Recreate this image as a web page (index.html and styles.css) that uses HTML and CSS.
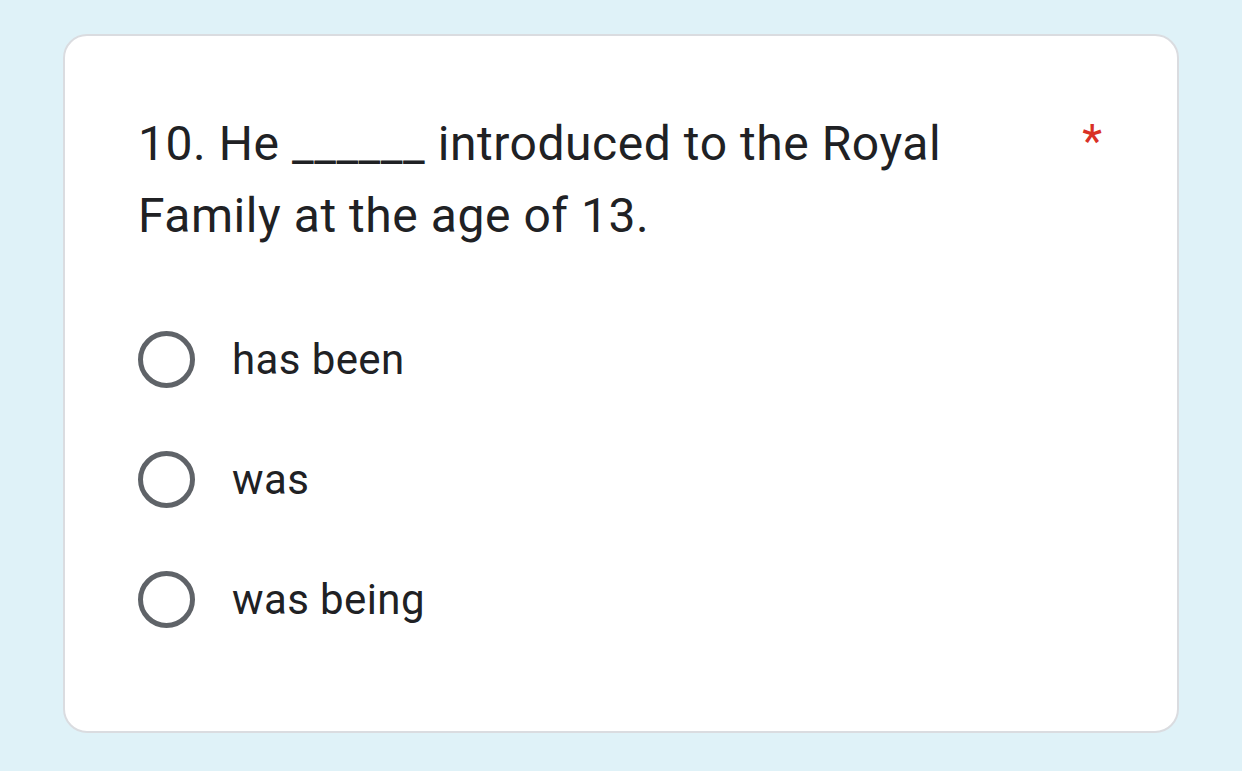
FILE: index.html
```html
<!DOCTYPE html>
<html lang="en">
<head>
    <meta charset="UTF-8">
    <meta name="viewport" content="width=device-width, initial-scale=1.0">
    <title>Question 10</title>
    <link rel="stylesheet" href="styles.css">
</head>
<body>

<div class="card">
    <div class="question-head">
        <div class="question-title">10. He ______ introduced to the Royal Family at the age of 13.</div>
        <span class="required">*</span>
    </div>

    <div class="options">
        <label class="option">
            <span class="radio"></span>
            <span class="option-text">has been</span>
        </label>
        <label class="option">
            <span class="radio"></span>
            <span class="option-text">was</span>
        </label>
        <label class="option">
            <span class="radio"></span>
            <span class="option-text">was being</span>
        </label>
    </div>
</div>

</body>
</html>
```

FILE: styles.css
```css
body {
    margin: 0;
    padding: 34px 0 0 63px;
    background-color: #dff2f8;
    font-family: Roboto, "Liberation Sans", Arial, sans-serif;
    color: #202124;
}
.card {
    width: 1116px;
    height: 699px;
    box-sizing: border-box;
    background-color: #fff;
    border: 2px solid #dadce0;
    border-radius: 24px;
    padding: 72px 72px 72px 73px;
    display: flex;
    flex-direction: column;
}
.question-head {
    display: flex;
    justify-content: space-between;
}
.question-title {
    font-size: 48px;
    line-height: 72px;
    max-width: 840px;
    letter-spacing: 0.55px;
}
.required {
    color: #d93025;
    font-size: 46px;
    line-height: 66px;
    margin-right: 3px;
}
.options {
    margin-top: 47px;
    display: flex;
    flex-direction: column;
}
.option {
    height: 120px;
    display: flex;
    align-items: center;
    gap: 37px;
}
.radio {
    width: 57px;
    height: 57px;
    box-sizing: border-box;
    border: 5px solid #5f6368;
    border-radius: 50%;
}
.option-text {
    font-size: 42px;
    letter-spacing: 0.4px;
}
```
